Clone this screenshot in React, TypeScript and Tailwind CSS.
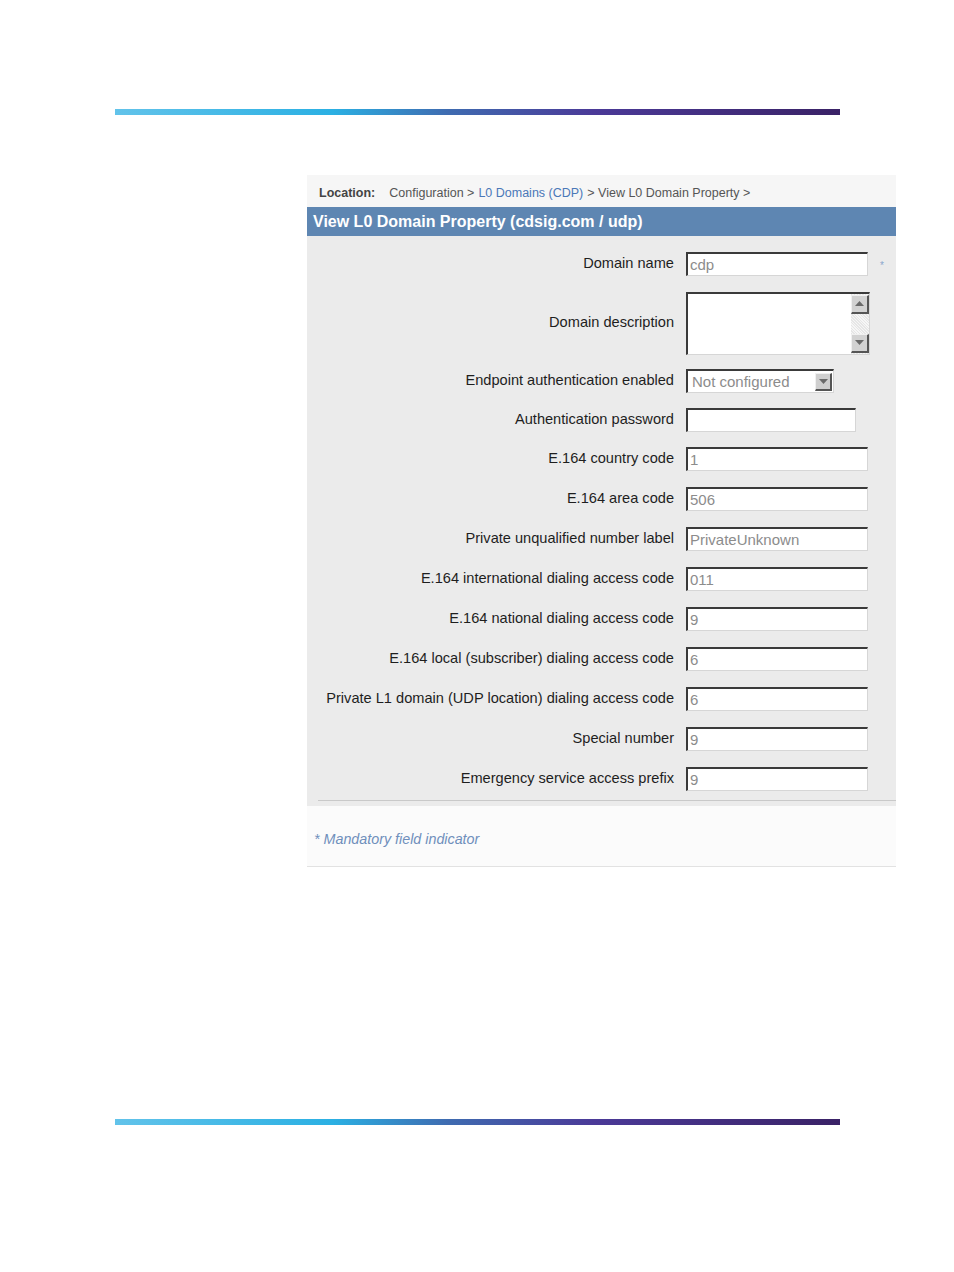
const rows: { label: string; value: string }[] = [
  { label: 'E.164 country code', value: '1' },
  { label: 'E.164 area code', value: '506' },
  { label: 'Private unqualified number label', value: 'PrivateUnknown' },
  { label: 'E.164 international dialing access code', value: '011' },
  { label: 'E.164 national dialing access code', value: '9' },
  { label: 'E.164 local (subscriber) dialing access code', value: '6' },
  { label: 'Private L1 domain (UDP location) dialing access code', value: '6' },
  { label: 'Special number', value: '9' },
  { label: 'Emergency service access prefix', value: '9' },
];

const inset = 'border-t-2 border-l-2 border-b border-r border-t-[#3a3a3a] border-l-[#3a3a3a] border-b-[#d6d6d6] border-r-[#d6d6d6] bg-white';

function Field({ value, w = 'w-[182px]' }: { value: string; w?: string }) {
  return (
    <div className={`${inset} ${w} h-[24px] flex items-center pl-[2px] text-[15px] text-[#8c8c8c] leading-none`}>
      {value}
    </div>
  );
}

function Label({ children }: { children: React.ReactNode }) {
  return <div className="w-[379px] shrink-0 text-right pr-[12px] text-[14.6px] text-[#1e1e1e]">{children}</div>;
}

function Bar() {
  return <div className="ml-[115px] w-[725px] h-[6px] bg-[linear-gradient(to_right,#62c3ea_0%,#2bb0e3_30%,#3f6bb0_46%,#4b3a98_66%,#3a2266_100%)]" />;
}

function ScrollBtn({ up }: { up?: boolean }) {
  return (
    <div className="w-[18px] h-[19px] bg-[#d2d2d2] border-t border-l border-t-[#f0f0f0] border-l-[#f0f0f0] border-b-2 border-r-2 border-b-[#555] border-r-[#555] flex items-center justify-center">
      <svg width="9" height="5" viewBox="0 0 9 5">
        <path d={up ? 'M0 5 L4.5 0 L9 5 Z' : 'M0 0 L4.5 5 L9 0 Z'} fill="#6a6a6a" />
      </svg>
    </div>
  );
}

export default function App() {
  return (
    <div className="w-[954px] h-[1272px] bg-white font-['Liberation_Sans',Arial,sans-serif] pt-[109px]">
      <Bar />

      <div className="ml-[307px] w-[589px] mt-[60px]">
        <div className="h-[32px] bg-[#f6f6f6] flex items-end pb-[8px] pl-[12px] text-[12.5px] text-[#555] leading-none">
          <span className="font-bold text-[#444]">Location:</span>
          <span className="ml-[14px]">Configuration &gt; </span>
          <span className="text-[#4a78b8] ml-[4px]">L0 Domains (CDP)</span>
          <span className="ml-[4px]">&gt; View L0 Domain Property &gt;</span>
        </div>

        <div className="h-[29px] bg-[#5e86b2] flex items-center pl-[6px] text-white font-bold text-[16px]">
          View L0 Domain Property (cdsig.com / udp)
        </div>

        <div className="bg-[#ebebeb] pt-[8px]">
          <div className="h-[40px] flex items-center">
            <Label>Domain name</Label>
            <Field value="cdp" />
            <span className="ml-[12px] text-[10px] text-[#8aa6cc] mt-[2px]">*</span>
          </div>

          <div className="h-[78px] flex items-center">
            <Label>Domain description</Label>
            <div className={`${inset} w-[184px] h-[63px] flex justify-end`}>
              <div className="w-[18px] flex flex-col justify-between py-[1px] bg-[repeating-linear-gradient(45deg,#e6e6e6_0px,#e6e6e6_1px,#f6f6f6_1px,#f6f6f6_2px)]">
                <ScrollBtn up />
                <ScrollBtn />
              </div>
            </div>
          </div>

          <div className="h-[38px] flex items-center">
            <Label>Endpoint authentication enabled</Label>
            <div className={`${inset} w-[148px] h-[24px] flex items-center justify-between pl-[4px] pr-[1px] text-[15px] text-[#8c8c8c] leading-none`}>
              Not configured
              <div className="w-[17px] h-[18px] bg-[#cfcfcf] border-t border-l border-t-[#f0f0f0] border-l-[#f0f0f0] border-b-2 border-r-2 border-b-[#555] border-r-[#555] flex items-center justify-center">
                <svg width="9" height="5" viewBox="0 0 9 5">
                  <path d="M0 0 L4.5 5 L9 0 Z" fill="#6a6a6a" />
                </svg>
              </div>
            </div>
          </div>

          <div className="h-[39px] flex items-center">
            <Label>Authentication password</Label>
            <Field value="" w="w-[170px]" />
          </div>

          {rows.map(r => (
            <div key={r.label} className="h-[40px] flex items-center">
              <Label>{r.label}</Label>
              <Field value={r.value} />
            </div>
          ))}

          <div className="ml-[11px] mt-[1px] border-t border-[#c9c9c9] h-[6px]" />
        </div>

        <div className="h-[61px] bg-[#fbfbfb] border-b border-[#e2e2e2] pt-[26px] pl-[7px] text-[14.3px] italic text-[#6f8fbb] leading-none">
          * Mandatory field indicator
        </div>
      </div>

      <div className="mt-[252px]">
        <Bar />
      </div>
    </div>
  );
}
